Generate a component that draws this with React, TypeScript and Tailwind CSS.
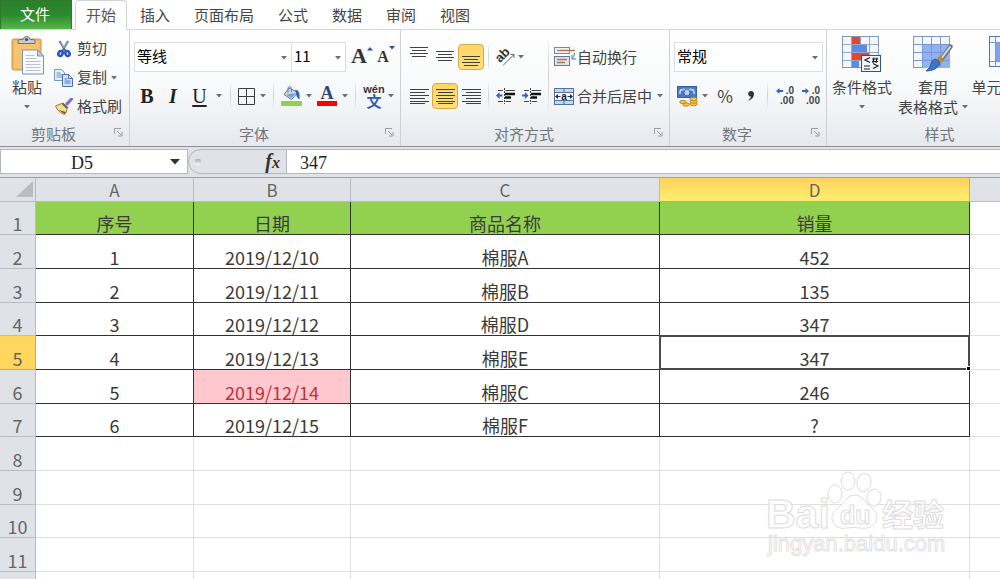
import { useState } from 'react'
import type { ReactNode } from 'react'
import clsx from 'clsx'

const TABS = ['开始', '插入', '页面布局', '公式', '数据', '审阅', '视图']

const COLUMNS = ['A', 'B', 'C', 'D']

const DATA: string[][] = [
  ['序号', '日期', '商品名称', '销量'],
  ['1', '2019/12/10', '棉服A', '452'],
  ['2', '2019/12/11', '棉服B', '135'],
  ['3', '2019/12/12', '棉服D', '347'],
  ['4', '2019/12/13', '棉服E', '347'],
  ['5', '2019/12/14', '棉服C', '246'],
  ['6', '2019/12/15', '棉服F', '?'],
]

const ROW_COUNT = 12

/* ---------- small building blocks ---------- */

interface ToolProps {
  label: string
  className?: string
  active?: boolean
  children: ReactNode
}

function Tool({ label, className, active, children }: ToolProps) {
  return (
    <button
      type="button"
      aria-label={label}
      title={label}
      className={clsx(
        'flex h-[26px] shrink-0 items-center justify-center rounded-sm',
        active && 'border border-[#d3a94a] bg-linear-to-b from-[#ffd565] to-[#ffe07a]',
        className,
      )}
    >
      {children}
    </button>
  )
}

function Caret() {
  return (
    <svg width="6" height="4" viewBox="0 0 6 4" className="shrink-0">
      <path d="M0 0h6L3 3.6z" fill="#6b6e73" />
    </svg>
  )
}

function More({ label, className }: { label: string; className: string }) {
  return (
    <Tool label={label} className={className}>
      <Caret />
    </Tool>
  )
}

function Separator({ className }: { className: string }) {
  return (
    <span
      className={clsx(
        'w-px shrink-0 bg-linear-to-b from-[#eceef0] via-[#cfd2d6] to-[#eceef0]',
        className,
      )}
    />
  )
}

interface ComboProps {
  label: string
  options: string[]
  className: string
}

function Combo({ label, options, className }: ComboProps) {
  return (
    <div className={clsx('relative h-[30px] border border-[#dcdde0] bg-white', className)}>
      <select
        aria-label={label}
        className="h-full w-full appearance-none bg-transparent pb-1.5 pl-0.5 text-[15px] leading-5 text-black outline-none"
      >
        {options.map((o) => (
          <option key={o}>{o}</option>
        ))}
      </select>
      <span className="pointer-events-none absolute top-[13px] right-1">
        <Caret />
      </span>
    </div>
  )
}

interface GroupProps {
  title: string
  className: string
  launcher?: boolean
  children: ReactNode
}

function Group({ title, className, launcher = true, children }: GroupProps) {
  return (
    <section
      aria-label={title}
      className={clsx('flex shrink-0 flex-col justify-between border-r border-[#cdd1d6]', className)}
    >
      {children}
      <footer className="flex h-6 items-center">
        <span className="flex-1 text-center text-[15px] leading-6 text-[#71767d]">{title}</span>
        {launcher && (
          <button
            type="button"
            aria-label={`${title}设置`}
            className="flex w-[22px] justify-center pb-1"
          >
            <svg width="9" height="9" viewBox="0 0 9 9" fill="none" stroke="#9a9ea4">
              <path d="M.5 6V.5H7" />
              <path d="M3 3l4 4M8 4v4H4" />
            </svg>
          </button>
        )}
      </footer>
    </section>
  )
}

function BigTool({
  icon,
  lines,
  className,
}: {
  icon: ReactNode
  lines: [string, string]
  className: string
}) {
  return (
    <button type="button" className={clsx('flex shrink-0 flex-col items-center', className)}>
      <span className="flex h-[42px] items-start pt-px">{icon}</span>
      <span className="text-[15px] leading-5 whitespace-nowrap">{lines[0]}</span>
      <span className="flex h-5 items-center gap-1 text-[15px] leading-5 whitespace-nowrap">
        {lines[1]}
        <Caret />
      </span>
    </button>
  )
}

/* ---------- icons ---------- */

function PasteIcon() {
  return (
    <svg width="36" height="40" viewBox="0 0 36 40">
      <rect x="3" y="3" width="29" height="31" rx="1.5" fill="#efb55c" stroke="#c9985a" />
      <rect x="5" y="5" width="25" height="27" fill="#f6c46e" />
      <path d="M9 7.500V5q0-1.500 2-1.500h3Q14.500.500 17.500.500T21 3.500h3q2 0 2 1.500v2.500z" fill="#c3cad3" stroke="#6d7680" />
      <circle cx="17.500" cy="3.500" r="1.600" fill="#49525c" />
      <path d="M13.500 14h15l6 6v18h-21z" fill="#f8fafd" stroke="#7f90aa" />
      <path d="M28.500 14v6h6z" fill="#c6d3e6" stroke="#7f90aa" />
      <path d="M16.500 19.500h9M16.500 22.500h11M16.500 25.500h15M16.500 28.500h15M16.500 31.500h15M16.500 34.500h15" stroke="#b7c2d2" />
    </svg>
  )
}

function CutIcon() {
  return (
    <svg width="18" height="18" viewBox="0 0 18 18" fill="none">
      <path d="M4.500 1l6 10M13 1L7.500 11" stroke="#4f7099" strokeWidth="2" />
      <path d="M5 1.500l4 6.500M12.500 1.500L9 8" stroke="#c4d3e4" strokeWidth=".6" />
      <ellipse cx="5.500" cy="13.500" rx="2" ry="2.500" stroke="#2c55c0" strokeWidth="2.600" transform="rotate(25 5.500 13.500)" />
      <ellipse cx="12.500" cy="13.500" rx="2" ry="2.500" stroke="#2c55c0" strokeWidth="2.600" transform="rotate(-25 12.500 13.500)" />
    </svg>
  )
}

function CopyIcon() {
  return (
    <svg width="19" height="18" viewBox="0 0 19 18">
      <path d="M.5.500h7l3 3v8H.500z" fill="#e6eefb" stroke="#7b98c9" />
      <path d="M2.500 4h4M2.500 6h6M2.500 8h6" stroke="#6f8fcc" />
      <path d="M8.500 5.500h6l4 4v8h-10z" fill="#d5e3fa" stroke="#4e6fb0" />
      <path d="M14.500 5.500v4h4z" fill="#fff" stroke="#4e6fb0" />
      <path d="M10.500 10h3M10.500 12h6M10.500 14h6" stroke="#4f77c4" />
    </svg>
  )
}

function BrushIcon() {
  return (
    <svg width="18" height="17" viewBox="0 0 18 17">
      <path d="M12 6l4.500-5" stroke="#7a6cc8" strokeWidth="3" strokeLinecap="round" />
      <path d="M8 4.500l5.500 5-2 2L6 6z" fill="#5f6470" />
      <path d="M6.500 5.500L.500 8q2 6 9 8.500 2.500-2 2.500-5.500z" fill="#ecd680" stroke="#9c8442" />
      <path d="M3 8.500q3 4 7 6M5 7.500q3 3 6 5" stroke="#fff5c4" fill="none" />
      <path d="M4 12l5.500 4 1.500-2z" fill="#6b5a2c" />
    </svg>
  )
}

function BordersIcon() {
  return (
    <svg width="17" height="17" viewBox="0 0 17 17" fill="none" stroke="#3d3d3d">
      <path d="M.5.500h16v16H.500zM8.500.500v16M.500 8.500h16" />
    </svg>
  )
}

function FillIcon() {
  return (
    <svg width="21" height="20" viewBox="0 0 21 20">
      <path d="M8 2L3 8.500l7.500 5L17 6.500z" fill="#cfdcec" stroke="#5778a5" />
      <path d="M5 8.500l5.500 3.500L15 7z" fill="#7fa0cd" />
      <path d="M7 7V2.500Q7 .600 8.800.600T10.500 2.500V6" fill="none" stroke="#6d7f96" />
      <path d="M14 3.500q5.500 0 4.500 10-3.500-2-3.500-7z" fill="#2f62bd" />
      <rect y="15" width="21" height="5" fill="#92d050" />
    </svg>
  )
}

function FontColorIcon() {
  return (
    <span className="flex flex-col items-center">
      <span className="text-lg leading-[15px] font-bold text-[#2c4877]">A</span>
      <span className="h-[5px] w-5 bg-[#f00]" />
    </span>
  )
}

function PhoneticIcon() {
  return (
    <span className="flex flex-col items-center">
      <span className="font-['Liberation_Sans',sans-serif] text-[11px] leading-[10px] font-bold text-[#333]">wén</span>
      <span className="text-[15px] leading-[14px] font-bold text-[#2f57c4]">文</span>
    </span>
  )
}

function VAlignIcon({ offset }: { offset: number }) {
  return (
    <svg width="18" height="24" viewBox="0 0 18 24" stroke="#404040" strokeWidth="1">
      <path d="M0 .5h18M2 3.500h14M0 6.500h18M2 9.500h14" transform={`translate(0 ${offset})`} />
    </svg>
  )
}

const H_ALIGN = {
  left: 'M0 .5h19M0 3.500h15M0 6.500h19M0 9.500h15M0 12.500h19M0 14.500h15',
  center: 'M0 .5h19M2 3.500h15M0 6.500h19M2 9.500h15M0 12.500h19M2 14.500h15',
  right: 'M0 .5h19M4 3.500h15M0 6.500h19M4 9.500h15M0 12.500h19M4 14.500h15',
}

function HAlignIcon({ side }: { side: keyof typeof H_ALIGN }) {
  return (
    <svg width="19" height="15" viewBox="0 0 19 15" stroke="#404040" strokeWidth="1">
      <path d={H_ALIGN[side]} />
    </svg>
  )
}

function OrientationIcon() {
  return (
    <svg width="20" height="20" viewBox="0 0 20 20">
      <text
        x="2"
        y="15"
        fontSize="13"
        fontWeight="bold"
        fontFamily="Liberation Sans, sans-serif"
        fill="#333"
        transform="rotate(-45 5 12)"
      >
        ab
      </text>
      <path d="M8 18.500L19 7.500M15.500 7.500H19V11" fill="none" stroke="#6b6b6b" />
    </svg>
  )
}

function IndentIcon({ increase }: { increase?: boolean }) {
  return (
    <svg width="19" height="16" viewBox="0 0 19 16">
      <path d="M2 2.500h5M9.500 2.500H19M2 13.500h5M9.500 13.500H15" stroke="#444" />
      <path d="M9 6h10M9 9.500h6" stroke="#111" strokeWidth="2.500" />
      <path d="M8.500 0v16" stroke="#444" strokeDasharray="2 1" />
      <path
        d={increase ? 'M6.500 7.500L3 4v2.500H0v2h3V11z' : 'M0 7.500L3.500 4v2.500H6.500v2h-3V11z'}
        fill="#2d65c8"
      />
    </svg>
  )
}

function WrapIcon() {
  return (
    <svg width="22" height="20" viewBox="0 0 22 20">
      <rect x=".5" y=".5" width="15" height="6" fill="#eef2f8" stroke="#7788a2" />
      <path d="M3 3.500h18" stroke="#b5764c" strokeWidth="1.400" />
      <rect x=".5" y="9.500" width="15" height="9" fill="#dde6f3" stroke="#63799c" />
      <path d="M3 12.500h10M3 15.500h8" stroke="#b5764c" strokeWidth="1.400" />
      <path d="M20.500 6q0 4-2.500 5.500M18 8v4h4" fill="none" stroke="#4a74b8" />
    </svg>
  )
}

function MergeIcon() {
  return (
    <svg width="20" height="17" viewBox="0 0 20 17">
      <rect x=".5" y=".5" width="19" height="16" fill="#c3d5ef" stroke="#5571a0" />
      <path d="M.5 4.500h19M.500 12.500h19M10 .500v4M10 12.500v4" stroke="#5571a0" />
      <rect x="1" y="5" width="18" height="7" fill="#f4f8fe" />
      <path d="M1 8.500L4 6v2h2.500v1H4v2zM19 8.500L16 6v2h-2.500v1H16v2z" fill="#1d2f55" />
      <text x="10" y="11.500" textAnchor="middle" fontSize="10" fontWeight="bold" fontFamily="Liberation Sans, sans-serif" fill="#222">
        a
      </text>
    </svg>
  )
}

function CurrencyIcon() {
  return (
    <svg width="22" height="21" viewBox="0 0 22 21">
      <rect x=".5" y=".5" width="19" height="11" fill="#4c77c2" stroke="#335ea8" />
      <path d="M3 8V6q0-2.500 3-2.500h8q3 0 3 2.500v2" stroke="#d7e5fa" fill="none" strokeWidth="1.300" />
      <ellipse cx="10" cy="6.500" rx="3" ry="3.500" fill="#b9cdf0" stroke="#3b62ac" />
      <g fill="#f4c443" stroke="#a77b1a" strokeWidth=".8">
        <ellipse cx="16.500" cy="18" rx="3.800" ry="1.800" />
        <ellipse cx="16.500" cy="15.500" rx="3.800" ry="1.800" />
        <ellipse cx="16.500" cy="13" rx="3.800" ry="1.800" />
        <ellipse cx="9" cy="18.500" rx="3.300" ry="1.700" />
        <ellipse cx="6" cy="16" rx="3.300" ry="1.700" />
      </g>
    </svg>
  )
}

function DecimalIcon({ decrease }: { decrease?: boolean }) {
  return (
    <svg width="19" height="20" viewBox="0 0 19 20">
      <path
        d={decrease ? 'M7 5L3.500 2v2H0v2h3.500v2z' : 'M0 5l3.500-3v2H7v2H3.500v2z'}
        fill="#2d65c8"
      />
      <g fontSize="10" fontWeight="bold" fontFamily="Liberation Sans, sans-serif" fill="#444">
        <text x="18" y="8" textAnchor="end">.0</text>
        <text x="18" y="18" textAnchor="end">.00</text>
      </g>
    </svg>
  )
}

function ConditionalIcon() {
  return (
    <svg width="40" height="36" viewBox="0 0 40 36">
      <rect x=".5" y=".5" width="36" height="31" fill="#f3f7fd" stroke="#8096bd" />
      <rect x="10" y="1" width="9" height="7" fill="#e8452f" />
      <rect x="10" y="8" width="15" height="8" fill="#5b8be6" />
      <rect x="10" y="16" width="17" height="8" fill="#e8452f" />
      <rect x="10" y="24" width="7" height="8" fill="#5b8be6" />
      <path d="M9.500.500v31M27.500.500v31M.500 8.500h36M.500 16.500h36M.500 24.500h36M18.500.500v7" stroke="#93a7cc" />
      <rect x="19.500" y="19.500" width="19" height="16" fill="#f2f6fc" stroke="#31527f" />
      <path d="M28 21.500l-5 2.500 5 2.500M31 27.500l5 2.500-5 2.500M22 30h6M22 33h6M30 23h6M30 25.500h6M32 21.500l-1 5.500M35 21.500l-1 5.500" fill="none" stroke="#222" strokeWidth="1.200" />
    </svg>
  )
}

function TableStyleIcon() {
  return (
    <svg width="40" height="36" viewBox="0 0 40 36">
      <rect x=".5" y=".5" width="36" height="31" fill="#f3f7fd" stroke="#8096bd" />
      <rect x="10" y="8" width="27" height="24" fill="#8fb3f2" />
      <path d="M9.500.500v31M18.500.500v31M27.500.500v31M.500 8.500h36M.500 16.500h36M.500 24.500h36" stroke="#7b97cc" />
      <path d="M37.500 10.500L28 24" stroke="#6f7780" strokeWidth="4.500" strokeLinecap="round" />
      <path d="M37 11L28 23" stroke="#d4d9de" strokeWidth="2" strokeLinecap="round" />
      <path d="M29 21.500l-4 4" stroke="#b48a4b" strokeWidth="5.500" />
      <path d="M22 23q4 1 5 5-4 7-14 7 5-4 5-7 1-4 4-5z" fill="#3f74c9" stroke="#2d579e" />
    </svg>
  )
}

function CellStyleIcon() {
  return (
    <svg width="40" height="36" viewBox="0 0 40 36">
      <rect x=".5" y=".5" width="36" height="30" fill="#f3f7fd" stroke="#5b7499" />
      <rect x="7" y="7" width="22" height="18" fill="#7aa5ee" />
      <path d="M6.500.500v30M.500 6.500h36M.500 25.500h36" stroke="#7b97cc" />
    </svg>
  )
}

function GrowFontIcon({ shrink }: { shrink?: boolean }) {
  return (
    <span className="flex items-start">
      <span
        className={clsx(
          "font-['Liberation_Serif',serif] leading-5 font-bold text-[#333]",
          shrink ? 'pt-1 text-base' : 'pt-0.5 text-[22px]',
        )}
      >
        A
      </span>
      <svg width="6" height="4" viewBox="0 0 6 4" className="mt-[3px]">
        <path d={shrink ? 'M0 0h6L3 3.600z' : 'M0 3.600h6L3 0z'} fill="#2d4f9c" />
      </svg>
    </span>
  )
}

/* ---------- ribbon ---------- */

function ClipboardGroup() {
  return (
    <Group title="剪贴板" className="w-[130px]">
      <div className="flex">
        <BigTool className="w-[54px] pt-[5px]" icon={<PasteIcon />} lines={['粘贴', '']} />
        <div className="flex flex-col pt-1 text-[15px]">
          <button type="button" className="flex h-[29px] items-center gap-1">
            <span className="flex w-[19px] justify-center"><CutIcon /></span>
            剪切
          </button>
          <button type="button" className="flex h-[29px] items-center gap-1">
            <span className="flex w-[19px] justify-center"><CopyIcon /></span>
            复制
            <Caret />
          </button>
          <button type="button" className="flex h-[29px] items-center gap-1">
            <span className="flex w-[19px] justify-center"><BrushIcon /></span>
            格式刷
          </button>
        </div>
      </div>
    </Group>
  )
}

function FontGroup() {
  return (
    <Group title="字体" className="w-[271px]">
      <div className="flex flex-col gap-[9px] pt-3 pl-1">
        <div className="flex">
          <Combo label="字体" options={['等线', '宋体', '微软雅黑']} className="w-[158px]" />
          <Combo label="字号" options={['11', '12', '14']} className="-ml-px w-[55px]" />
          <Tool label="增大字号" className="ml-1 w-6"><GrowFontIcon /></Tool>
          <Tool label="减小字号" className="w-6"><GrowFontIcon shrink /></Tool>
        </div>
        <div className="flex h-[30px] items-center font-['Liberation_Serif','Noto_Sans_CJK_SC',serif] text-xl text-[#222]">
          <Tool label="加粗" className="w-[26px] font-bold">B</Tool>
          <Tool label="倾斜" className="w-[26px] font-bold italic">I</Tool>
          <Tool label="下划线" className="w-[27px] underline underline-offset-2">U</Tool>
          <More label="下划线样式" className="w-3" />
          <Separator className="mx-[5px] h-6" />
          <Tool label="边框" className="w-5"><BordersIcon /></Tool>
          <More label="边框样式" className="w-[14px]" />
          <Separator className="mx-[3px] h-6" />
          <Tool label="填充颜色" className="w-7"><FillIcon /></Tool>
          <More label="更多填充颜色" className="w-2" />
          <Tool label="字体颜色" className="w-7"><FontColorIcon /></Tool>
          <More label="更多字体颜色" className="w-2" />
          <Separator className="mx-[6px] h-6" />
          <Tool label="拼音指南" className="w-6 font-['Noto_Sans_CJK_SC',sans-serif]"><PhoneticIcon /></Tool>
          <More label="拼音选项" className="w-[10px]" />
        </div>
      </div>
    </Group>
  )
}

function AlignGroup() {
  return (
    <Group title="对齐方式" className="w-[269px]">
      <div className="flex pt-3 pl-[5px]">
        <div className="flex flex-col gap-[9px]">
          <div className="flex h-[30px] items-center">
            <Tool label="顶端对齐" className="w-[26px]"><VAlignIcon offset={2} /></Tool>
            <Tool label="垂直居中" className="w-[26px]"><VAlignIcon offset={6} /></Tool>
            <Tool label="底端对齐" active className="w-[26px]"><VAlignIcon offset={11} /></Tool>
            <Separator className="mx-1 h-6" />
            <Tool label="方向" className="w-6"><OrientationIcon /></Tool>
            <More label="方向选项" className="w-2" />
          </div>
          <div className="flex h-[30px] items-center">
            <Tool label="左对齐" className="w-[26px]"><HAlignIcon side="left" /></Tool>
            <Tool label="居中" active className="w-[26px]"><HAlignIcon side="center" /></Tool>
            <Tool label="右对齐" className="w-[26px]"><HAlignIcon side="right" /></Tool>
            <Separator className="mx-1 h-6" />
            <Tool label="减少缩进" className="w-6"><IndentIcon /></Tool>
            <Tool label="增加缩进" className="w-7"><IndentIcon increase /></Tool>
          </div>
        </div>
        <Separator className="mx-[3px] h-[70px]" />
        <div className="flex flex-col gap-[9px] pl-0.5 text-[15px]">
          <button type="button" className="flex h-[30px] items-center gap-px">
            <span className="flex w-[22px]"><WrapIcon /></span>
            自动换行
          </button>
          <button type="button" className="flex h-[30px] items-center gap-px">
            <span className="flex w-[22px]"><MergeIcon /></span>
            合并后居中
            <span className="pl-1"><Caret /></span>
          </button>
        </div>
      </div>
    </Group>
  )
}

function NumberGroup() {
  return (
    <Group title="数字" className="w-[157px]">
      <div className="flex flex-col gap-[9px] pt-3 pl-1">
        <Combo label="数字格式" options={['常规', '数值', '货币', '日期']} className="w-[149px]" />
        <div className="flex h-[30px] items-center">
          <Tool label="会计数字格式" className="w-[27px]"><CurrencyIcon /></Tool>
          <More label="更多会计格式" className="w-2" />
          <Tool label="百分比样式" className="ml-0.5 w-7 text-[17px]">%</Tool>
          <Tool label="千位分隔样式" className="w-6">
            <svg width="8" height="10" viewBox="0 0 8 10">
              <path d="M4 0a2.800 2.800 0 0 1 3 3q0 4-5 6.500L1.500 9Q4 7.500 4 5.600A2.800 2.800 0 0 1 4 0z" fill="#333" />
            </svg>
          </Tool>
          <Separator className="mx-1 h-6" />
          <Tool label="增加小数位数" className="w-[26px]"><DecimalIcon /></Tool>
          <Tool label="减少小数位数" className="w-[26px]"><DecimalIcon decrease /></Tool>
        </div>
      </div>
    </Group>
  )
}

function StyleGroup() {
  return (
    <Group title="样式" className="w-[226px]" launcher={false}>
      <div className="flex pt-[5px]">
        <BigTool className="w-[70px]" icon={<ConditionalIcon />} lines={['条件格式', '']} />
        <BigTool className="w-[72px]" icon={<TableStyleIcon />} lines={['套用', '表格格式']} />
        <BigTool className="w-[80px]" icon={<CellStyleIcon />} lines={['单元格样式', '']} />
      </div>
    </Group>
  )
}

function Ribbon() {
  const [tab, setTab] = useState(TABS[0])

  return (
    <header>
      <nav className="flex h-[30px] items-end border-b border-[#d3d6da] bg-white text-[15px]">
        <button
          type="button"
          className="mr-[3px] h-full w-[72px] border border-b-0 border-[#2c7a2a] bg-linear-to-b from-[#2a7f2b] via-[#2b8a2e] to-[#55b649] pr-0.5 pb-0.5 text-white"
        >
          文件
        </button>
        {TABS.map((t) => (
          <button
            key={t}
            type="button"
            onClick={() => setTab(t)}
            className={clsx(
              'h-[30px]',
              t === tab
                ? 'mr-px -mb-px rounded-t-sm border border-b-0 border-[#cfd2d7] bg-white px-[10px] text-[#555]'
                : 'px-3 pt-0.5 text-[#444]',
            )}
          >
            {t}
          </button>
        ))}
      </nav>
      <div className="flex h-[117px] overflow-hidden border-b border-[#8d9299] bg-linear-to-b from-white via-[#f8f9fa] to-[#e6e9ed] text-[#444]">
        <ClipboardGroup />
        <FontGroup />
        <AlignGroup />
        <NumberGroup />
        <StyleGroup />
      </div>
    </header>
  )
}

/* ---------- formula bar ---------- */

function FormulaBar() {
  return (
    <div className="flex border-b border-[#9da2ac] bg-[#dfe3e8] pt-0.5 pb-[3px] font-['Liberation_Serif','Noto_Sans_CJK_SC',serif] text-lg text-[#222]">
      <div className="flex h-[25px] w-[188px] shrink-0 border border-[#b4b8be] bg-white">
        <input
          aria-label="名称框"
          defaultValue="D5"
          className="w-[162px] bg-transparent pt-0.5 text-center outline-none"
        />
        <button type="button" aria-label="名称列表" className="flex flex-1 items-center justify-center">
          <svg width="10" height="6" viewBox="0 0 10 6">
            <path d="M0 0h10L5 5.500z" fill="#333" />
          </svg>
        </button>
      </div>
      <div className="flex h-[25px] w-[99px] shrink-0 items-center justify-between rounded-l-full border border-[#b4b8be] bg-[#dfe2e6] px-1.5">
        <span className="h-1.5 w-1.5 rounded-xs bg-linear-to-b from-[#a6abb1] to-white" />
        <button type="button" aria-label="插入函数" className="flex items-baseline font-bold text-[#333] italic">
          <span className="text-xl leading-5">f</span>
          <span className="text-base leading-5">x</span>
        </button>
      </div>
      <input
        aria-label="编辑栏"
        defaultValue="347"
        className="h-[25px] min-w-0 flex-1 border-y border-[#b4b8be] bg-white pt-0.5 pl-[13px] outline-none"
      />
    </div>
  )
}

/* ---------- sheet ---------- */

function Watermark() {
  return (
    <svg
      width="192"
      height="92"
      viewBox="0 0 192 92"
      className="pointer-events-none absolute top-[290px] right-[52px]"
      fill="#fff"
      fillOpacity=".8"
      stroke="#dcdcdc"
      strokeLinejoin="round"
      fontFamily="Liberation Sans, Noto Sans CJK SC, sans-serif"
    >
      <ellipse cx="79" cy="26" rx="7" ry="9" />
      <ellipse cx="92" cy="13" rx="7" ry="9" />
      <ellipse cx="108" cy="14.500" rx="7" ry="9" transform="rotate(10 108 14.500)" />
      <ellipse cx="118" cy="29.500" rx="7" ry="8.500" transform="rotate(10 118 29.500)" />
      <path d="M98.500 27c-7 0-9 6-14 11-6 5-10 8-8 15s9 8 14 7q7-1 14 0c7 1 14-1 16-8s-3-11-8-15c-5-5-7-10-14-10z" />
      <text x="10" y="60" fontSize="41" fontWeight="bold">
        Bai
      </text>
      <text x="84" y="56" fontSize="25" fontWeight="bold">
        du
      </text>
      <text x="126" y="58" fontSize="31" fontWeight="bold">
        经验
      </text>
      <text x="12" y="83" fontSize="22" stroke="#e2e2e2">
        jingyan.baidu.com
      </text>
    </svg>
  )
}

function Sheet() {
  const rows = Array.from({ length: ROW_COUNT }, (_, i) => i)

  return (
    <main className="relative">
      <table className="w-full table-fixed border-separate border-spacing-0 text-lg leading-[22px]">
        <colgroup>
          <col className="w-9" />
          <col className="w-[158px]" />
          <col className="w-[157px]" />
          <col className="w-[309px]" />
          <col className="w-[310px]" />
          <col />
        </colgroup>
        <thead>
          <tr className="h-6 text-[17px] text-[#666]">
            <th className="border-r border-b border-[#b9bdc3] bg-[#dfe3e8] p-0">
              <svg width="17" height="17" viewBox="0 0 17 17" className="mr-0.5 ml-auto block" role="img" aria-label="全选">
                <path d="M17 0v16H0z" fill="#b9bdc1" />
              </svg>
            </th>
            {COLUMNS.map((c) => (
              <th
                key={c}
                scope="col"
                className={clsx(
                  'border-r border-b p-0 pt-px font-normal',
                  c === 'D'
                    ? 'border-[#d9a648] bg-linear-to-b from-[#ffd25c] to-[#ffef70]'
                    : 'border-[#b9bdc3] bg-[#dfe3e8]',
                )}
              >
                {c}
              </th>
            ))}
            <td className="border-b border-[#b9bdc3] bg-[#dfe3e8] p-0" />
          </tr>
        </thead>
        <tbody>
          {rows.map((r) => (
            <tr key={r} className={r % 3 === 0 ? 'h-[33px]' : 'h-[34px]'}>
              <th
                scope="row"
                className={clsx(
                  'border-r border-b p-0 align-bottom font-normal text-[#666]',
                  r === 4 ? 'border-[#d9a648] bg-[#ffd75f]' : 'border-[#b9bdc3] bg-[#dfe3e8]',
                )}
              >
                {r + 1}
              </th>
              {COLUMNS.map((c, ci) => {
                const selected = r === 4 && c === 'D'
                return (
                  <td
                    key={c}
                    className={clsx(
                      'border-r border-b p-0 text-center align-bottom',
                      r < DATA.length ? 'border-[#333]' : 'border-[#dfdfe1]',
                      r === 0 && 'bg-[#92d050]',
                      r === 5 && c === 'B' ? 'bg-[#ffc7ce] text-[#c0303c]' : 'text-[#3a3a3a]',
                      selected && 'relative',
                    )}
                  >
                    {DATA[r]?.[ci]}
                    {selected && (
                      <span className="absolute -inset-px border-2 border-[#4a4a4a]">
                        <span className="absolute -right-[3px] -bottom-[3px] h-[5px] w-[5px] border border-white bg-black" />
                      </span>
                    )}
                  </td>
                )
              })}
              <td className="border-b border-[#dfdfe1] p-0" />
            </tr>
          ))}
        </tbody>
      </table>
      <Watermark />
    </main>
  )
}

export default function App() {
  return (
    <div className="h-screen overflow-hidden bg-white font-['Noto_Sans_CJK_SC',sans-serif]">
      <Ribbon />
      <FormulaBar />
      <Sheet />
    </div>
  )
}
